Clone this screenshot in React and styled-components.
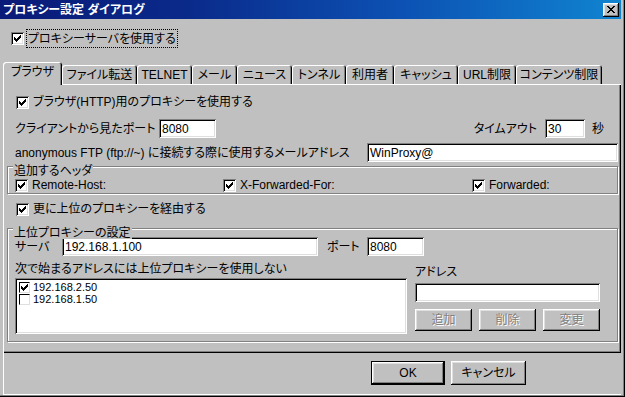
import React from "react";
import styled, { createGlobalStyle, css } from "styled-components";

const GlobalStyle = createGlobalStyle`
  html, body {
    margin: 0;
    padding: 0;
    background: #c0c0c0;
  }
  body {
    font-family: "Liberation Sans", "Noto Sans CJK JP", sans-serif;
    font-size: 12px;
    line-height: 14px;
    color: #000;
    font-feature-settings: "palt";
  }
  * {
    box-sizing: border-box;
  }
`;

const raised = css`
  box-shadow: inset -1px -1px #000, inset 1px 1px #fff, inset -2px -2px #808080,
    inset 2px 2px #dfdfdf;
`;

const sunken = css`
  box-shadow: inset 1px 1px #808080, inset -1px -1px #fff, inset 2px 2px #000,
    inset -2px -2px #dfdfdf;
`;

const Window = styled.div`
  width: 625px;
  height: 397px;
  display: flex;
  flex-direction: column;
  background: #c0c0c0;
  box-shadow: inset -1px -1px #000, inset -2px -2px #808080;
  overflow: hidden;
`;

const TitleBar = styled.div`
  width: 621px;
  height: 19px;
  flex: none;
  display: flex;
  align-items: center;
  padding: 0 2px 0 3px;
  background: linear-gradient(to right, #0a1a78 0%, #0a2a8a 30%, #0c52b4 65%, #1084d0 100%);
`;

const Title = styled.span`
  color: #fff;
  font-weight: bold;
  font-size: 12px;
`;

const CloseButton = styled.div`
  margin-left: auto;
  width: 16px;
  height: 14px;
  background: #c0c0c0;
  ${raised};
  display: flex;
  align-items: center;
  justify-content: center;
`;

const Body = styled.div`
  flex: 1;
  display: flex;
  flex-direction: column;
  padding: 0 4px 0 3px;
`;

const TopRow = styled.div`
  margin-top: 11px;
  height: 17px;
  display: flex;
  align-items: center;
  padding-left: 8px;
`;

const FocusLabel = styled.span`
  margin-left: 3px;
  height: 17px;
  padding: 0 1px;
  display: flex;
  align-items: center;
  outline: 1px dotted #000;
`;

const TabStrip = styled.div`
  margin-top: 15px;
  height: 22px;
  display: flex;
  align-items: flex-end;
`;

const Tab = styled.div`
  width: ${(p) => p.$w}px;
  height: ${(p) => (p.$active ? 23 : 19)}px;
  margin-bottom: ${(p) => (p.$active ? -1 : 0)}px;
  padding-bottom: ${(p) => (p.$active ? 3 : 0)}px;
  display: flex;
  align-items: center;
  justify-content: center;
  background: #c0c0c0;
  border-radius: 3px 3px 0 0;
  box-shadow: inset 1px 1px #fff, inset -1px 0 #000, inset -2px 0 #808080;
  position: relative;
  z-index: ${(p) => (p.$active ? 1 : 0)};
  white-space: nowrap;
`;

const TabPanel = styled.div`
  height: 269px;
  display: flex;
  flex-direction: column;
  padding: 1px 3px 0 4px;
  box-shadow: inset 1px 1px #fff, inset -1px -1px #000, inset -2px -2px #808080;
`;

const Row = styled.div`
  margin-top: ${(p) => p.$mt || 0}px;
  display: flex;
  align-items: center;
  padding-left: ${(p) => p.$pl ?? 8}px;
  padding-right: ${(p) => p.$pr || 0}px;
  white-space: nowrap;
`;

const CheckRow = styled.label`
  margin-top: ${(p) => p.$mt || 0}px;
  height: 16px;
  display: flex;
  align-items: center;
  gap: 4px;
  padding-left: ${(p) => p.$pl ?? 9}px;
  white-space: nowrap;
`;

const Label = styled.span`
  flex: none;
  width: ${(p) => (p.$w ? `${p.$w}px` : "auto")};
  margin-left: ${(p) => p.$ml || 0}px;
  margin-right: ${(p) => p.$mr || 0}px;
`;

const Spacer = styled.div`
  flex: 1;
`;

const TextBox = styled.div`
  flex: ${(p) => (p.$w || p.$fixed ? "none" : 1)};
  width: ${(p) => (p.$w ? `${p.$w}px` : "auto")};
  height: 19px;
  margin-left: ${(p) => p.$ml || 0}px;
  margin-top: ${(p) => p.$mt || 0}px;
  padding: 0 3px;
  display: flex;
  align-items: center;
  background: #fff;
  ${sunken};
`;

const GroupBox = styled.div`
  position: relative;
  margin-top: ${(p) => p.$mt || 0}px;
  height: ${(p) => p.$h}px;
  border: 1px solid #808080;
  box-shadow: inset 1px 1px #fff, 1px 1px 0 #fff;
  display: flex;
  flex-direction: column;
`;

const Caption = styled.span`
  position: absolute;
  top: -2px;
  left: 5px;
  padding: 0 1px;
  line-height: 12px;
  background: #c0c0c0;
`;

const HeaderGrid = styled.div`
  margin-top: 10px;
  display: grid;
  grid-template-columns: 208px 249px 1fr;
  padding-left: 6px;
`;

const Box = styled.span`
  flex: none;
  width: 13px;
  height: 13px;
  background: #fff;
  ${sunken};
  display: flex;
  align-items: center;
  justify-content: center;
`;

const SmallBox = styled.span`
  flex: none;
  width: 11px;
  height: 11px;
  background: #fff;
  border-left: 1px solid #000;
  border-top: 1px solid #000;
  border-right: 1px solid #dfdfdf;
  border-bottom: 1px solid #dfdfdf;
  display: flex;
  align-items: center;
  justify-content: center;
`;

const LowerSection = styled.div`
  margin-top: 6px;
  display: flex;
  gap: 8px;
  padding-left: 7px;
`;

const Column = styled.div`
  width: ${(p) => p.$w}px;
  display: flex;
  flex-direction: column;
  padding-top: ${(p) => p.$pt || 0}px;
`;

const ListBox = styled.div`
  margin-top: 2px;
  height: 56px;
  background: #fff;
  ${sunken};
  padding: 3px 2px 0 4px;
  display: flex;
  flex-direction: column;
`;

const ListItem = styled.div`
  height: 12px;
  line-height: 12px;
  display: flex;
  align-items: center;
  gap: 3px;
  font-size: 11px;
`;

const ButtonRow = styled.div`
  margin-top: 7px;
  display: flex;
  gap: 7px;
`;

const Button = styled.div`
  width: ${(p) => p.$w}px;
  height: ${(p) => p.$h || 22}px;
  display: flex;
  align-items: center;
  justify-content: center;
  background: #c0c0c0;
  ${raised};
  color: ${(p) => (p.$disabled ? "#808080" : "#000")};
  text-shadow: ${(p) => (p.$disabled ? "1px 1px 0 #fff" : "none")};
`;

const DefaultButton = styled(Button)`
  box-shadow: inset 0 0 0 1px #000, inset -2px -2px #000, inset 2px 2px #fff,
    inset -3px -3px #808080, inset 3px 3px #dfdfdf;
`;

const Footer = styled.div`
  height: 42px;
  display: flex;
  justify-content: flex-end;
  align-items: flex-start;
  gap: 6px;
  padding: 8px 95px 0 0;
  box-shadow: inset 1px 0 #fff, inset 0 -1px #fff;
  margin-bottom: 2px;
`;

const checkPath =
  "M0 2h1v3h-1z M1 3h1v3h-1z M2 4h1v3h-1z M3 3h1v3h-1z M4 2h1v3h-1z M5 1h1v3h-1z M6 0h1v3h-1z";

const CheckMark = () => (
  <svg width="7" height="7" viewBox="0 0 7 7" shapeRendering="crispEdges">
    <path d={checkPath} fill="#000" />
  </svg>
);

const Check = ({ checked }) => <Box>{checked && <CheckMark />}</Box>;

const SmallCheck = ({ checked }) => (
  <SmallBox>{checked && <CheckMark />}</SmallBox>
);

const CloseGlyph = () => (
  <svg width="8" height="7" viewBox="0 0 8 7" shapeRendering="crispEdges">
    <path
      d="M0 0h2v1h-2z M6 0h2v1h-2z M1 1h2v1h-2z M5 1h2v1h-2z M2 2h4v1h-4z M3 3h2v1h-2z M2 4h4v1h-4z M1 5h2v1h-2z M5 5h2v1h-2z M0 6h2v1h-2z M6 6h2v1h-2z"
      fill="#000"
    />
  </svg>
);

const tabs = [
  ["ブラウザ", 59],
  ["ファイル転送", 75],
  ["TELNET", 55],
  ["メール", 45],
  ["ニュース", 55],
  ["トンネル", 54],
  ["利用者", 48],
  ["キャッシュ", 64],
  ["URL制限", 58],
  ["コンテンツ制限", 86],
];

export default function App() {
  return (
    <>
      <GlobalStyle />
      <Window>
        <TitleBar>
          <Title>プロキシー設定 ダイアログ</Title>
          <CloseButton>
            <CloseGlyph />
          </CloseButton>
        </TitleBar>
        <Body>
          <TopRow>
            <Check checked />
            <FocusLabel>プロキシーサーバを使用する</FocusLabel>
          </TopRow>
          <TabStrip>
            {tabs.map(([name, w], i) => (
              <Tab key={name} $w={w} $active={i === 0}>
                {name}
              </Tab>
            ))}
          </TabStrip>
          <TabPanel>
            <CheckRow $mt={9}>
              <Check checked />
              <span>ブラウザ(HTTP)用のプロキシーを使用する</span>
            </CheckRow>
            <Row $mt={9} $pr={14}>
              <Label $w={144}>クライアントから見たポート</Label>
              <TextBox $w={57}>8080</TextBox>
              <Spacer />
              <Label $mr={8}>タイムアウト</Label>
              <TextBox $w={40}>30</TextBox>
              <Label $ml={7}>秒</Label>
            </Row>
            <Row $mt={5}>
              <Label $w={352}>anonymous FTP (ftp://~) に接続する際に使用するメールアドレス</Label>
              <TextBox>WinProxy@</TextBox>
            </Row>
            <GroupBox $mt={4} $h={28}>
              <Caption>追加するヘッダ</Caption>
              <HeaderGrid>
                <CheckRow $pl={1}>
                  <Check checked />
                  <span>Remote-Host:</span>
                </CheckRow>
                <CheckRow $pl={1}>
                  <Check checked />
                  <span>X-Forwarded-For:</span>
                </CheckRow>
                <CheckRow $pl={1}>
                  <Check checked />
                  <span>Forwarded:</span>
                </CheckRow>
              </HeaderGrid>
            </GroupBox>
            <CheckRow $mt={7}>
              <Check checked />
              <span>更に上位のプロキシーを経由する</span>
            </CheckRow>
            <GroupBox $mt={11} $h={114}>
              <Caption>上位プロキシーの設定</Caption>
              <Row $mt={8} $pl={7}>
                <Label $w={47}>サーバ</Label>
                <TextBox $w={256}>192.168.1.100</TextBox>
                <Label $ml={9} $w={40}>ポート</Label>
                <TextBox $w={57}>8080</TextBox>
              </Row>
              <LowerSection>
                <Column $w={392}>
                  <Label>次で始まるアドレスには上位プロキシーを使用しない</Label>
                  <ListBox>
                    <ListItem>
                      <SmallCheck checked />
                      <span>192.168.2.50</span>
                    </ListItem>
                    <ListItem>
                      <SmallCheck />
                      <span>192.168.1.50</span>
                    </ListItem>
                  </ListBox>
                </Column>
                <Column $w={185} $pt={3}>
                  <Label>アドレス</Label>
                  <TextBox $fixed $mt={4} />
                  <ButtonRow>
                    <Button $w={57} $disabled>追加</Button>
                    <Button $w={57} $disabled>削除</Button>
                    <Button $w={57} $disabled>変更</Button>
                  </ButtonRow>
                </Column>
              </LowerSection>
            </GroupBox>
          </TabPanel>
          <Footer>
            <DefaultButton $w={74} $h={24}>OK</DefaultButton>
            <Button $w={75} $h={24}>キャンセル</Button>
          </Footer>
        </Body>
      </Window>
    </>
  );
}
